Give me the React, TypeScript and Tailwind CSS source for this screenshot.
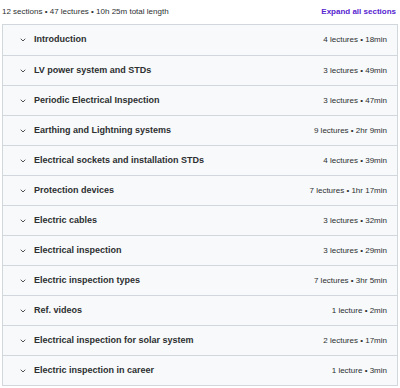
const sections = [
  { title: "Introduction", meta: "4 lectures • 18min" },
  { title: "LV power system and STDs", meta: "3 lectures • 49min" },
  { title: "Periodic Electrical Inspection", meta: "3 lectures • 47min" },
  { title: "Earthing and Lightning systems", meta: "9 lectures • 2hr 9min" },
  { title: "Electrical sockets and installation STDs", meta: "4 lectures • 39min" },
  { title: "Protection devices", meta: "7 lectures • 1hr 17min" },
  { title: "Electric cables", meta: "3 lectures • 32min" },
  { title: "Electrical inspection", meta: "3 lectures • 29min" },
  { title: "Electric inspection types", meta: "7 lectures • 3hr 5min" },
  { title: "Ref. videos", meta: "1 lecture • 2min" },
  { title: "Electrical inspection for solar system", meta: "2 lectures • 17min" },
  { title: "Electric inspection in career", meta: "1 lecture • 3min" },
];

function Chevron() {
  return (
    <svg width="8" height="8" viewBox="0 0 24 24" fill="none" stroke="#2d2f31" strokeWidth="2.5" strokeLinecap="round" strokeLinejoin="round">
      <path d="M6 9l6 6 6-6" />
    </svg>
  );
}

export default function App() {
  return (
    <div className="w-[400px] h-[388px] bg-white font-['Liberation_Sans',Arial,sans-serif] text-[#2d2f31]">
      <div className="flex h-[24px] items-center justify-between pl-[2px] pr-[4px]">
        <span className="text-[8px]">12 sections • 47 lectures • 10h 25m total length</span>
        <span className="text-[8px] font-bold text-[#5624d0]">Expand all sections</span>
      </div>
      <div className="mx-[2px] w-[396px] border border-[#d1d7dc]">
        {sections.map((s, i) => (
          <div
            key={s.title}
            className={`flex h-[30px] items-center justify-between bg-[#f7f9fa] pl-[16px] pr-[10px] ${i > 0 ? "border-t border-[#d1d7dc]" : ""}`}
          >
            <div className="flex items-center gap-[7px]">
              <Chevron />
              <span className="text-[9px] font-bold">{s.title}</span>
            </div>
            <span className="text-[8px] text-[#2d2f31]">{s.meta}</span>
          </div>
        ))}
      </div>
    </div>
  );
}
